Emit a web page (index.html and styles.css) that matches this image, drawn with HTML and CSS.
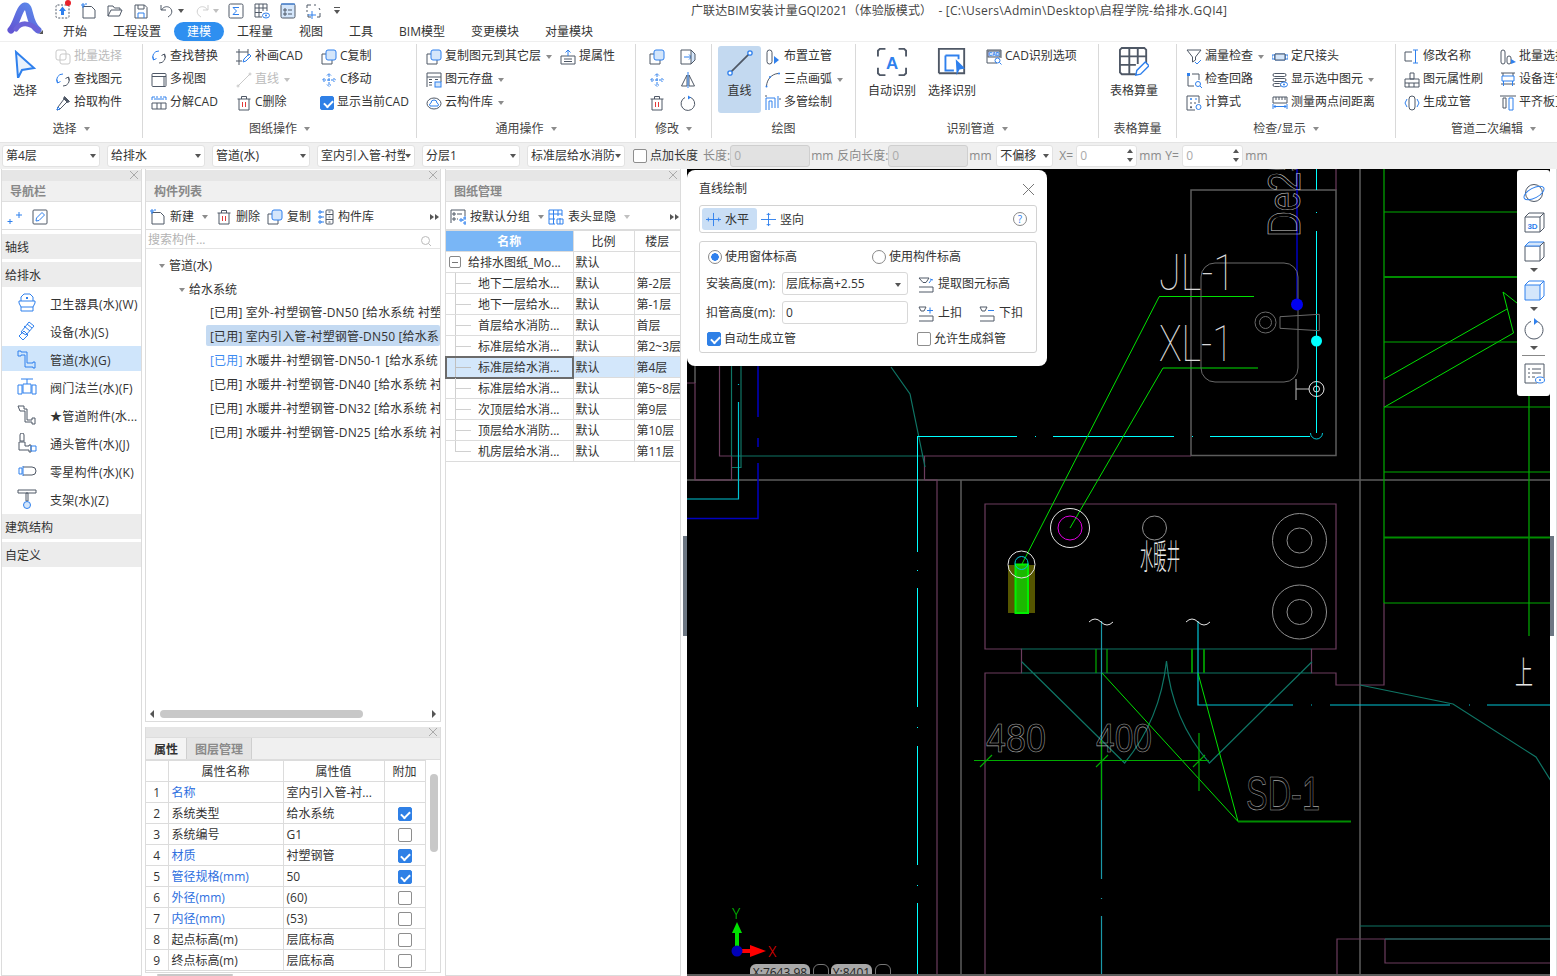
FILE: index.html
```html
<!DOCTYPE html>
<html lang="zh-CN">
<head>
<meta charset="utf-8">
<title>广联达BIM安装计量GQI2021</title>
<link rel="stylesheet" href="styles.css">
</head>
<body>
<svg class="sprite" width="0" height="0">
<defs>
<linearGradient id="logo-g" x1="0" y1="1" x2="1" y2="0"><stop offset="0" stop-color="#6257d4"/><stop offset="1" stop-color="#5a8cec"/></linearGradient>
<symbol id="q-up" viewBox="0 0 16 16"><rect x="1" y="2" width="13" height="13" rx="1.5" stroke-dasharray="2 1.5"/><path class="ifb" d="M7.5 3.5 11 8H9v4H6V8H4z"/></symbol>
<symbol id="q-new" viewBox="0 0 16 16"><path d="M2 3.5h8.5l3.5 3.5v8H2z"/><path class="ib" d="M1 1h2v2H1zM4 1h2M1 4h2"/></symbol>
<symbol id="q-open" viewBox="0 0 16 16"><path d="M1 13V3h5l1.500 2H13v2M1 13h11.500L15 7H4z"/></symbol>
<symbol id="q-save" viewBox="0 0 16 16"><path d="M2 2h9.500L14 4.500V15H2zM5 2v4h6V2"/><path class="ib" d="M5 15v-5h6v5M2 12"/></symbol>
<symbol id="q-undo" viewBox="0 0 16 16"><path d="M2 2v5h5M2.500 7C4.500 3.500 8 3 10.500 4.500c3.500 2.500 3 7-1.500 9.500"/></symbol>
<symbol id="q-redo" viewBox="0 0 16 16"><path class="il" d="M14 2v5H9M13.500 7C11.500 3.500 8 3 5.500 4.500c-3.500 2.500-3 7 1.500 9.500"/></symbol>
<symbol id="q-sum" viewBox="0 0 16 16"><rect x="1" y="1" width="14" height="14" rx="1.500"/><path class="ib" d="M11 4.500H5l3.500 3.500L5 11.500h6"/></symbol>
<symbol id="q-teye" viewBox="0 0 16 16"><path d="M1 1h12v7M1 1v13h7M1 5h12M1 9.500h7M5 1v13M9 1v7"/><ellipse class="ib" cx="12" cy="12.500" rx="3.500" ry="2.500"/><circle class="ifb" cx="12" cy="12.500" r="1"/></symbol>
<symbol id="q-list" viewBox="0 0 16 16"><rect class="ifl" x="1" y="1" width="14" height="14" rx="1.500"/><path class="ib" d="M1 1h14"/><path d="M4 6h2v2H4zM4 10h2v2H4zM8 7h4M8 11h4"/></symbol>
<symbol id="q-frame" viewBox="0 0 16 16"><path d="M1 5V2h4M8 2h2M13 5l1 2M14 10v4h-3M5 14H2v-3M1 7v2"/><path class="ib" d="M2 12h8M6 8v8"/></symbol>
<symbol id="r-batch" viewBox="0 0 16 16"><g class="ig"><rect x="1" y="1" width="10" height="10" rx="2"/><rect x="5" y="5" width="10" height="10" rx="2"/></g></symbol>
<symbol id="r-find" viewBox="0 0 16 16"><path class="ib" d="M8 2a6 6 0 0 0-5.500 9M2 7.500l.5 3.500 3-1.500"/><path d="M8 14a6 6 0 0 0 5.500-9M14 8.500 13.500 5l-3 1.500"/></symbol>
<symbol id="r-pick" viewBox="0 0 16 16"><path d="M10.500 2.500 13.500 5.500M9 4l3 3-7 7-3 1 1-3z"/><path class="ifs" d="M9.500 1.500 14.500 6.500 12.500 7.500 8.500 3.500z"/><path class="ib" d="M3 12l-1 3 3-1z"/></symbol>
<symbol id="r-view" viewBox="0 0 16 16"><rect x="1" y="1.500" width="14" height="13" rx="1"/><path d="M1 4.500h14M13 4.500v10"/></symbol>
<symbol id="r-cadadd" viewBox="0 0 16 16"><path d="M3 0v16M0 3h12M0 12h6M12 0v7"/><path class="ib" d="M7 13l1-3 5-5 2 2-5 5z"/></symbol>
<symbol id="r-line" viewBox="0 0 16 16"><path class="ig" d="M2 14 14 2"/><circle class="ig" cx="2" cy="14" r="1"/><circle class="ig" cx="14" cy="2" r="1"/></symbol>
<symbol id="r-split" viewBox="0 0 16 16"><path class="ib" d="M1 5V2h3M15 5V2h-3M5 2h2M9 2h2"/><path d="M1 8h14M1 14h14M1 8v6M6 8v6M10 8v6M15 8v6"/><path class="ib" d="M3 4h10"/></symbol>
<symbol id="r-trash" viewBox="0 0 16 16"><path d="M1.500 4h13M5.500 4V1.500h5V4M3 4v11h10V4"/><path class="ir" d="M6.500 7v5M9.500 7v5"/></symbol>
<symbol id="r-copy" viewBox="0 0 16 16"><path d="M5 5H1v10h10v-4"/><rect class="ib ifl" x="5" y="1" width="10" height="10" rx="2"/></symbol>
<symbol id="r-move" viewBox="0 0 16 16"><g class="ib"><path d="M8 2v12M2 8h12M6 3.500l2-2 2 2M6 12.500l2 2 2-2M3.500 6l-2 2 2 2M12.500 6l2 2-2 2" stroke-dasharray="3 1"/></g></symbol>
<symbol id="r-store" viewBox="0 0 16 16"><path d="M1 15V1h14v9M1 5h14"/><path d="M3 7.500h3M3 10.500h3M9 7.500h3M3 13h3"/><rect class="ib ifl" x="9" y="10" width="6" height="5"/></symbol>
<symbol id="r-cloud" viewBox="0 0 16 16"><ellipse cx="8" cy="8.500" rx="7" ry="5.500"/><path class="ib" d="M4 11h8M4 11a2 2 0 0 1 1-3a3 3 0 0 1 6 0a2 2 0 0 1 1 3"/></symbol>
<symbol id="r-prop" viewBox="0 0 16 16"><path d="M1 7h14v8H1zM4 10h8M4 12.500h8"/><path class="ib" d="M8 7V1M5.500 3.500 8 1l2.500 2.500"/></symbol>
<symbol id="r-flip" viewBox="0 0 16 16"><path d="M11 1H1v14h10"/><path class="ib" d="M4 8h7M9 5.500 11.500 8 9 10.500"/><path class="ifl" d="M11 1l4 4v6l-4 4z"/></symbol>
<symbol id="r-mirror" viewBox="0 0 16 16"><path d="M7 3 1.500 14H7zM9 3l5.500 11H9z"/><path class="ib" d="M8 0v16"/></symbol>
<symbol id="r-rot" viewBox="0 0 16 16"><path d="M10 2.200A6.800 6.800 0 1 1 5 2.500"/><path class="ifb" d="M8 .5l3 2-3 2z"/></symbol>
<symbol id="b-pointer" viewBox="0 0 24 28"><path class="ib2" d="M3 2 21 18l-12 2-4 8z"/></symbol>
<symbol id="b-line" viewBox="0 0 30 30"><path class="ibd" d="M5 25 25 5"/><circle class="icw" cx="3.500" cy="26.500" r="2.500"/><circle class="icw" cx="26.500" cy="3.500" r="2.500"/></symbol>
<symbol id="d-riser" viewBox="0 0 16 16"><rect x="2" y="1" width="5" height="14" rx="2.500"/><path class="ifb" d="M9 7l5 4-5 4z"/></symbol>
<symbol id="d-arc" viewBox="0 0 16 16"><path d="M1.500 14C2 7 7 2 13 1.500"/><circle class="ifb" cx="1.500" cy="14.500" r="1"/><circle class="ifb" cx="14" cy="1.500" r="1"/><circle class="ifb" cx="5" cy="5" r="1"/></symbol>
<symbol id="d-multi" viewBox="0 0 16 16"><path class="ib" d="M1 15V3h9v10M4 15V6h3v7M13 13V1"/><path d="M0 1h2M14 4h2"/></symbol>
<symbol id="b-auto" viewBox="0 0 32 30"><path class="ibd2" d="M1 9V3l2-2h6M23 1h6l2 2v6M1 21v6l2 2h6M23 29h6l2-2v-6"/><text class="big-a" x="16" y="22" text-anchor="middle">A</text></symbol>
<symbol id="b-sel" viewBox="0 0 32 32"><path class="ibd2" d="M2 28V2h27v26H2"/><path class="ibl2" d="M9 9h14v4M9 9v16h9"/><path class="ifb" d="M20 13l10 10-6 1-3 6z"/></symbol>
<symbol id="r-cad" viewBox="0 0 16 16"><path d="M11 14H1V1h14v8"/><rect class="ifl" x="2" y="2" width="12" height="6"/><text class="mini-t" x="8" y="7" text-anchor="middle">CAD</text><circle class="ib" cx="11.500" cy="11.500" r="2.500"/><path class="ib" d="M13.500 13.500 15.500 15.500"/></symbol>
<symbol id="b-table" viewBox="0 0 32 32"><path class="ibd2" d="M18 29H3l-2-2V3l2-2h24l2 2v15"/><path class="ibd2" d="M1 10h28M1 19h17M11 1v28M20 1v17"/><path class="ib2n" d="M18 30l1-5 9-9 4 4-9 9z"/></symbol>
<symbol id="c-funnel" viewBox="0 0 16 16"><path d="M1 1h14L9.500 8v3L6.500 13V8z"/><path class="ib" d="M9 13l2 2 4-4"/></symbol>
<symbol id="c-loop" viewBox="0 0 16 16"><path d="M2 3v11h6M6 2h7v6"/><rect class="ifb" x="1" y="1" width="3" height="3"/><circle class="ib" cx="12" cy="12" r="2.500"/><path class="ib" d="M14 14l2 2"/></symbol>
<symbol id="c-calc" viewBox="0 0 16 16"><path d="M13 8V1H1v14h8"/><path class="ib" d="M4 4h2M5 3v2M9 4h2"/><path d="M4 8h2M8 8h2M4 11.500l2 1.500M6 11.500 4 13"/><circle class="ib" cx="12.500" cy="12" r="2.500"/></symbol>
<symbol id="c-joint" viewBox="0 0 16 16"><path class="ib" d="M0 6h3v4H0zM13 6h3v4h-3zM3 5h10v6H3z"/><path class="ifl" d="M3 5h10v6H3z"/></symbol>
<symbol id="c-show" viewBox="0 0 16 16"><rect x="1" y="1.500" width="13" height="3" rx="1.500"/><rect x="1" y="6.500" width="13" height="3" rx="1.500"/><rect x="1" y="11.500" width="8" height="3" rx="1.500"/><ellipse class="ib icw2" cx="12" cy="12.500" rx="3.500" ry="2.500"/><circle class="ifb" cx="12" cy="12.500" r="1"/></symbol>
<symbol id="c-measure" viewBox="0 0 16 16"><path d="M1 2h14v6H1zM4 2v3M7 2v3M10 2v3M13 2v3"/><path class="ib" d="M1 9v5M15 9v5M2 11.500h12M3.500 10l-1.500 1.500L3.500 13M12.500 10l1.500 1.500L12.500 13"/></symbol>
<symbol id="e-name" viewBox="0 0 16 16"><path d="M8 3H1v9h7"/><path class="ib" d="M9 1h5M9 14h5M11.500 1v13"/></symbol>
<symbol id="e-brush" viewBox="0 0 16 16"><path d="M6 1h4v6H6zM1 7h14v8H1zM1 11h14M5 11v4M10 11v4"/></symbol>
<symbol id="e-gen" viewBox="0 0 16 16"><rect x="5" y="1" width="6" height="14" rx="3"/><path class="ib" d="M3 4 1 8l2 4M13 4l2 4-2 4"/></symbol>
<symbol id="e-batch" viewBox="0 0 16 16"><rect x="1" y="1" width="4" height="14" rx="2"/><rect x="7" y="7" width="4" height="8" rx="2"/><path class="ifb" d="M11 10l5 3-5 2z"/></symbol>
<symbol id="e-dev" viewBox="0 0 16 16"><path d="M1 1h14M3 1v3M13 1v3M1 12h14"/><path class="ib" d="M2 4h12v5H2zM3.500 9v5M12.500 9v5"/></symbol>
<symbol id="e-align" viewBox="0 0 16 16"><path d="M0 1h16M3 3h3v10H3z"/><path class="ib" d="M9 3h4v12H9z"/></symbol>
<symbol id="n-san" viewBox="0 0 20 20"><path class="ib" d="M4 8V4l3-3h6l3 3v4M2 8h16v2l-2 4v4H4v-4l-2-4zM4 14h12"/><path class="ifb" d="M9 4h2v2H9z"/></symbol>
<symbol id="n-dev" viewBox="0 0 20 20"><path class="ib" d="M4 11 12 1l5 4-8 9zM2 15l5-5 4 4-5 5zM7 5l6 5M10 3l5 4"/></symbol>
<symbol id="n-pipe" viewBox="0 0 20 20"><path class="ib" d="M1 2h3v1h6v11h6v-1h2v6h-2v-1H8V6H4v1H1z"/></symbol>
<symbol id="n-valve" viewBox="0 0 20 20"><path class="ib" d="M4 2h12M10 2v5M6 7h8v9H6zM1 8h4v9H1zM15 8h4v9h-4z"/></symbol>
<symbol id="n-fit" viewBox="0 0 20 20"><path class="id" d="M1 1h6v3h3v11h5v-2h3v6h-3v-2H8V6H3z"/></symbol>
<symbol id="n-head" viewBox="0 0 20 20"><path class="id" d="M3 2a2 2 0 0 1 4 0v6H3zM2 9h6v4h4v-1h2v7h-2v-2H2z"/><path class="ib" d="M14 13h5v5h-5z"/></symbol>
<symbol id="n-misc" viewBox="0 0 20 20"><path class="id" d="M6 6h9a3.500 3.500 0 0 1 0 8H6"/><path class="ib" d="M2 7h3v6H2zM6 5v10"/></symbol>
<symbol id="n-sup" viewBox="0 0 20 20"><path class="id" d="M1 1h18v3H1zM9 4h2v8H9z"/><circle class="ib ifl" cx="10" cy="16" r="3.500"/></symbol>
<symbol id="p-wand" viewBox="0 0 16 16"><path class="ib" d="M9 6h6M12 3v6M3 10v5M0.500 12.500h5"/></symbol>
<symbol id="p-edit" viewBox="0 0 16 16"><rect x="1" y="1" width="14" height="14" rx="1"/><path class="ib" d="M4 12l.5-3L10 3.500l2.500 2.500L7 11.500z"/></symbol>
<symbol id="p-lib" viewBox="0 0 16 16"><path class="ib" d="M1 2h2v2H1zM1 7h2v2H1zM1 12h2v2H1zM3 3h3M3 8h3M3 13h3"/><rect x="8" y="1" width="7" height="14" rx="1"/><path d="M8 5.500h7M8 10.500h7M10.500 3h2M10.500 8h2M10.500 13h2"/></symbol>
<symbol id="p-group" viewBox="0 0 16 16"><path d="M1 14V1h14v6"/><path d="M3 4h2v2H3zM3 9h2v2H3zM7 5h5M7 10h1"/><path class="ib" d="M10 10h2v2h-2zM14 8h2v2h-2zM14 13h2v2h-2zM12 11h2"/></symbol>
<symbol id="p-cols" viewBox="0 0 16 16"><path class="ib" d="M1 1h13v6M1 1v14h6M1 5h13M1 10h6M5.500 1v14M10 1v6"/><path class="ib" d="M9 10h6v5H9zM12 9v6"/></symbol>
<symbol id="g-h" viewBox="0 0 16 16"><path class="ib" d="M0 8h16M8 1v14"/><path class="ib" d="M2.500 6v4M13.500 6v4"/></symbol>
<symbol id="g-v" viewBox="0 0 16 16"><path class="ib" d="M0 8h16M8 1v14M6 2.500h4M6 13.500h4"/></symbol>
<symbol id="g-get" viewBox="0 0 16 16"><path d="M1 1h10L8 5.500H5zM1 15h14M1 10h14v5"/><path class="ib" d="M11 6l3-4M12 2l3 1"/></symbol>
<symbol id="g-in" viewBox="0 0 16 16"><path d="M1 1h7L6 5H3zM1 10h14v5H1"/><path class="ib" d="M9 4.500h6M12 1.500v6"/></symbol>
<symbol id="g-out" viewBox="0 0 16 16"><path d="M1 1h7L6 5H3zM1 10h14v5H1"/><path class="ib" d="M9 4.500h6"/></symbol>
<symbol id="f-globe" viewBox="0 0 22 22"><circle cx="11" cy="11" r="8.500"/><ellipse class="ib" cx="11" cy="11" rx="11" ry="5" transform="rotate(-28 11 11)"/></symbol>
<symbol id="f-3d" viewBox="0 0 22 22"><path d="M2 6h15v15H2zM2 6l4-4h15v15l-4 4M17 6l4-4"/><text class="mini-3" x="9.500" y="18" text-anchor="middle">3D</text></symbol>
<symbol id="f-cube" viewBox="0 0 22 22"><path d="M2 6h15v15H2z"/><path class="ib ifl" d="M2 6l4-4h15l-4 4z"/><path d="M17 6l4-4v15l-4 4"/></symbol>
<symbol id="f-cubeb" viewBox="0 0 22 22"><path class="ib ifl" d="M2 6h15v15H2z"/><path class="ib" d="M2 6l4-4h15v15l-4 4M17 6l4-4"/></symbol>
<symbol id="f-rot" viewBox="0 0 22 22"><path d="M14 3.500A9 9 0 1 1 8 3.500"/><path class="ifb" d="M11 0l4 3.500-4 3.500z"/></symbol>
<symbol id="f-list" viewBox="0 0 22 22"><path d="M14 21H2V2h19v14"/><path d="M5 7h2M9 7h9M5 11h2M9 11h9M5 15h2M9 15h3"/><ellipse class="ib" cx="17" cy="18" rx="4.500" ry="3"/><circle class="ifb" cx="17" cy="18" r="1"/></symbol>
</defs>
</svg>

<div class="app">
  <header class="top">
    <div class="logo">
      <svg width="38" height="34" viewBox="0 0 38 34"><path class="logo-a" d="M5 28C11 22 13 5 19 4c6 0 3 17 13 24"/><path class="logo-b" d="M10 27c5-7 13-7 22 1"/></svg>
      <i class="logo-corner"></i>
    </div>
    <div class="top-main">
      <div class="qat">
        <span class="q"><svg class="ico qi"><use href="#q-up"/></svg><i class="reddot"></i></span>
        <span class="q"><svg class="ico qi"><use href="#q-new"/></svg></span>
        <span class="q"><svg class="ico qi"><use href="#q-open"/></svg></span>
        <span class="q"><svg class="ico qi"><use href="#q-save"/></svg></span>
        <span class="q"><svg class="ico qi"><use href="#q-undo"/></svg></span>
        <span class="q-arrow"><i class="caret dark"></i></span>
        <span class="q q-m"><svg class="ico qi"><use href="#q-redo"/></svg></span>
        <span class="q-arrow"><i class="caret light"></i></span>
        <span class="q"><svg class="ico qi"><use href="#q-sum"/></svg></span>
        <span class="q"><svg class="ico qi"><use href="#q-teye"/></svg></span>
        <span class="q"><svg class="ico qi"><use href="#q-list"/></svg></span>
        <span class="q"><svg class="ico qi"><use href="#q-frame"/></svg></span>
        <span class="q-more"><i class="more-bar"></i><i class="caret dark"></i></span>
        <span class="title">广联达BIM安装计量GQI2021（体验版模式） &nbsp;- <span class="title-p">[C:\Users\Admin\Desktop\启程学院-给排水.GQI4]</span></span>
      </div>
      <nav class="tabs">
        <span class="tab">开始</span><span class="tab">工程设置</span><span class="tab tab-on">建模</span><span class="tab">工程量</span><span class="tab">视图</span><span class="tab">工具</span><span class="tab">BIM模型</span><span class="tab">变更模块</span><span class="tab">对量模块</span>
      </nav>
    </div>
  </header>

  <section class="ribbon">
    <div class="grp g1">
      <div class="grp-body">
        <div class="big big-sel"><svg class="ico big-ic ic-ptr"><use href="#b-pointer"/></svg><span>选择</span></div>
        <div class="col c1a">
          <div class="it dis"><svg class="ico"><use href="#r-batch"/></svg>批量选择</div>
          <div class="it"><svg class="ico"><use href="#r-find"/></svg>查找图元</div>
          <div class="it"><svg class="ico"><use href="#r-pick"/></svg>拾取构件</div>
        </div>
      </div>
      <div class="grp-lab">选择<i class="caret"></i></div>
    </div>
    <div class="grp g2">
      <div class="grp-body">
        <div class="col w85">
          <div class="it"><svg class="ico"><use href="#r-find"/></svg>查找替换</div>
          <div class="it"><svg class="ico"><use href="#r-view"/></svg>多视图</div>
          <div class="it"><svg class="ico"><use href="#r-split"/></svg>分解CAD</div>
        </div>
        <div class="col w85">
          <div class="it"><svg class="ico"><use href="#r-cadadd"/></svg>补画CAD</div>
          <div class="it dis"><svg class="ico"><use href="#r-line"/></svg>直线<i class="caret light it-c"></i></div>
          <div class="it"><svg class="ico"><use href="#r-trash"/></svg>C删除</div>
        </div>
        <div class="col">
          <div class="it"><svg class="ico"><use href="#r-copy"/></svg>C复制</div>
          <div class="it"><svg class="ico"><use href="#r-move"/></svg>C移动</div>
          <div class="it it-chk"><i class="chk on"></i>显示当前CAD</div>
        </div>
      </div>
      <div class="grp-lab">图纸操作<i class="caret"></i></div>
    </div>
    <div class="grp g3">
      <div class="grp-body">
        <div class="col w134">
          <div class="it"><svg class="ico"><use href="#r-copy"/></svg>复制图元到其它层<i class="caret it-c"></i></div>
          <div class="it"><svg class="ico"><use href="#r-store"/></svg>图元存盘<i class="caret it-c"></i></div>
          <div class="it"><svg class="ico"><use href="#r-cloud"/></svg>云构件库<i class="caret it-c"></i></div>
        </div>
        <div class="col">
          <div class="it"><svg class="ico"><use href="#r-prop"/></svg>提属性</div>
        </div>
      </div>
      <div class="grp-lab">通用操作<i class="caret"></i></div>
    </div>
    <div class="grp g4">
      <div class="grp-body">
        <div class="col w31">
          <div class="it"><svg class="ico"><use href="#r-copy"/></svg></div>
          <div class="it"><svg class="ico"><use href="#r-move"/></svg></div>
          <div class="it"><svg class="ico"><use href="#r-trash"/></svg></div>
        </div>
        <div class="col">
          <div class="it"><svg class="ico"><use href="#r-flip"/></svg></div>
          <div class="it"><svg class="ico"><use href="#r-mirror"/></svg></div>
          <div class="it"><svg class="ico"><use href="#r-rot"/></svg></div>
        </div>
      </div>
      <div class="grp-lab">修改<i class="caret"></i></div>
    </div>
    <div class="grp g5">
      <div class="grp-body">
        <div class="big big-line"><svg class="ico big-ic ic-line"><use href="#b-line"/></svg><span>直线</span></div>
        <div class="col c5">
          <div class="it"><svg class="ico"><use href="#d-riser"/></svg>布置立管</div>
          <div class="it"><svg class="ico"><use href="#d-arc"/></svg>三点画弧<i class="caret it-c"></i></div>
          <div class="it"><svg class="ico"><use href="#d-multi"/></svg>多管绘制</div>
        </div>
      </div>
      <div class="grp-lab lab-plain">绘图</div>
    </div>
    <div class="grp g6">
      <div class="grp-body">
        <div class="big big-auto"><svg class="ico big-ic ic-big"><use href="#b-auto"/></svg><span>自动识别</span></div>
        <div class="big big-pick"><svg class="ico big-ic ic-big"><use href="#b-sel"/></svg><span>选择识别</span></div>
        <div class="col c6"><div class="it"><svg class="ico"><use href="#r-cad"/></svg>CAD识别选项</div></div>
      </div>
      <div class="grp-lab">识别管道<i class="caret"></i></div>
    </div>
    <div class="grp g7">
      <div class="grp-body">
        <div class="big big-tab"><svg class="ico big-ic ic-big"><use href="#b-table"/></svg><span>表格算量</span></div>
      </div>
      <div class="grp-lab lab-plain">表格算量</div>
    </div>
    <div class="grp g8">
      <div class="grp-body">
        <div class="col w86">
          <div class="it"><svg class="ico"><use href="#c-funnel"/></svg>漏量检查<i class="caret it-c"></i></div>
          <div class="it"><svg class="ico"><use href="#c-loop"/></svg>检查回路</div>
          <div class="it"><svg class="ico"><use href="#c-calc"/></svg>计算式</div>
        </div>
        <div class="col">
          <div class="it"><svg class="ico"><use href="#c-joint"/></svg>定尺接头</div>
          <div class="it"><svg class="ico"><use href="#c-show"/></svg>显示选中图元<i class="caret it-c"></i></div>
          <div class="it"><svg class="ico"><use href="#c-measure"/></svg>测量两点间距离</div>
        </div>
      </div>
      <div class="grp-lab">检查/显示<i class="caret"></i></div>
    </div>
    <div class="grp g9">
      <div class="grp-body">
        <div class="col w96">
          <div class="it"><svg class="ico"><use href="#e-name"/></svg>修改名称</div>
          <div class="it"><svg class="ico"><use href="#e-brush"/></svg>图元属性刷</div>
          <div class="it"><svg class="ico"><use href="#e-gen"/></svg>生成立管</div>
        </div>
        <div class="col">
          <div class="it"><svg class="ico"><use href="#e-batch"/></svg>批量选择</div>
          <div class="it"><svg class="ico"><use href="#e-dev"/></svg>设备连管</div>
          <div class="it"><svg class="ico"><use href="#e-align"/></svg>平齐板顶</div>
        </div>
      </div>
      <div class="grp-lab">管道二次编辑<i class="caret"></i></div>
    </div>
  </section>

  <section class="optbar">
    <div class="sel">第4层<i class="caret dark"></i></div>
    <div class="sel">给排水<i class="caret dark"></i></div>
    <div class="sel">管道(水)<i class="caret dark"></i></div>
    <div class="sel"><span class="clip">室内引入管-衬塑</span><i class="caret dark"></i></div>
    <div class="sel">分层1<i class="caret dark"></i></div>
    <div class="sel"><span class="clip">标准层给水消防</span><i class="caret dark"></i></div>
    <i class="chk opt-chk"></i><span class="opt-t">点加长度</span>
    <span class="opt-g opt-len">长度:</span><span class="inp-dis">0</span><span class="opt-g opt-mm">mm</span>
    <span class="opt-g">反向长度:</span><span class="inp-dis">0</span><span class="opt-g opt-mm">mm</span>
    <div class="sel sel-off">不偏移<i class="caret dark"></i></div>
    <span class="opt-g opt-x">X=</span><span class="spin">0<i class="spin-b"><i class="caret dark up"></i><i class="caret dark"></i></i></span><span class="opt-g opt-mm2">mm</span>
    <span class="opt-g opt-x">Y=</span><span class="spin">0<i class="spin-b"><i class="caret dark up"></i><i class="caret dark"></i></i></span><span class="opt-g opt-mm2">mm</span>
  </section>

  <main class="main">
    <aside class="panel pa">
      <div class="strip"><i class="x"></i></div>
      <div class="ph">导航栏</div>
      <div class="pt pt-nav"><svg class="ico"><use href="#p-wand"/></svg><svg class="ico"><use href="#p-edit"/></svg></div>
      <div class="nav">
        <div class="nh">轴线</div>
        <div class="nh">给排水</div>
        <div class="ni"><svg class="ico nic"><use href="#n-san"/></svg>卫生器具(水)(W)</div>
        <div class="ni"><svg class="ico nic"><use href="#n-dev"/></svg>设备(水)(S)</div>
        <div class="ni ni-on"><svg class="ico nic"><use href="#n-pipe"/></svg>管道(水)(G)</div>
        <div class="ni"><svg class="ico nic"><use href="#n-valve"/></svg>阀门法兰(水)(F)</div>
        <div class="ni"><svg class="ico nic"><use href="#n-fit"/></svg>★管道附件(水...</div>
        <div class="ni"><svg class="ico nic"><use href="#n-head"/></svg>通头管件(水)(J)</div>
        <div class="ni"><svg class="ico nic"><use href="#n-misc"/></svg>零星构件(水)(K)</div>
        <div class="ni"><svg class="ico nic"><use href="#n-sup"/></svg>支架(水)(Z)</div>
        <div class="nh">建筑结构</div>
        <div class="nh">自定义</div>
      </div>
    </aside>

    <div class="midcol">
      <section class="panel pb">
        <div class="strip"><i class="x"></i></div>
        <div class="ph">构件列表</div>
        <div class="pt">
          <span class="pi"><svg class="ico"><use href="#q-new"/></svg>新建<i class="caret pi-c"></i></span>
          <span class="pi pi-del"><svg class="ico"><use href="#r-trash"/></svg>删除</span>
          <span class="pi"><svg class="ico"><use href="#r-copy"/></svg>复制</span>
          <span class="pi"><svg class="ico"><use href="#p-lib"/></svg>构件库</span>
          <span class="ff"><i></i><i></i></span>
        </div>
        <div class="search">搜索构件...<svg class="ico sic" viewBox="0 0 12 12"><circle cx="5.500" cy="5.500" r="4"/><path d="M8.500 8.500 11 11"/></svg></div>
        <div class="tree">
          <div class="tr tr0"><i class="caret"></i>管道(水)</div>
          <div class="tr tr1"><i class="caret"></i>给水系统</div>
          <div class="tl">[已用] 室外-衬塑钢管-DN50 [给水系统 衬塑</div>
          <div class="tl tl-on">[已用] 室内引入管-衬塑钢管-DN50 [给水系</div>
          <div class="tl"><span class="used">[已用]</span> 水暖井-衬塑钢管-DN50-1 [给水系统</div>
          <div class="tl">[已用] 水暖井-衬塑钢管-DN40 [给水系统 衬</div>
          <div class="tl">[已用] 水暖井-衬塑钢管-DN32 [给水系统 衬</div>
          <div class="tl">[已用] 水暖井-衬塑钢管-DN25 [给水系统 衬</div>
        </div>
        <div class="hs"><i class="tri-l"></i><i class="hs-th"></i><i class="tri-r"></i></div>
      </section>
      <section class="panel pp">
        <div class="strip"><i class="x"></i></div>
        <div class="ptabs"><span class="ptab ptab-on">属性</span><span class="ptab">图层管理</span></div>
        <div class="pbody">
          <table class="grid gp">
            <thead><tr><th></th><th>属性名称</th><th>属性值</th><th>附加</th></tr></thead>
            <tbody>
              <tr><td class="n">1</td><td class="lnk">名称</td><td>室内引入管-衬...</td><td></td></tr>
              <tr><td class="n">2</td><td>系统类型</td><td>给水系统</td><td class="ck"><i class="chk on"></i></td></tr>
              <tr><td class="n">3</td><td>系统编号</td><td>G1</td><td class="ck"><i class="chk"></i></td></tr>
              <tr><td class="n">4</td><td class="lnk">材质</td><td>衬塑钢管</td><td class="ck"><i class="chk on"></i></td></tr>
              <tr><td class="n">5</td><td class="lnk">管径规格(mm)</td><td>50</td><td class="ck"><i class="chk on"></i></td></tr>
              <tr><td class="n">6</td><td class="lnk">外径(mm)</td><td>(60)</td><td class="ck"><i class="chk"></i></td></tr>
              <tr><td class="n">7</td><td class="lnk">内径(mm)</td><td>(53)</td><td class="ck"><i class="chk"></i></td></tr>
              <tr><td class="n">8</td><td>起点标高(m)</td><td>层底标高</td><td class="ck"><i class="chk"></i></td></tr>
              <tr><td class="n">9</td><td>终点标高(m)</td><td>层底标高</td><td class="ck"><i class="chk"></i></td></tr>
            </tbody>
          </table>
          <div class="vs"><i class="vs-th"></i></div>
        </div>
      </section>
      <i class="hs2"></i>
    </div>

    <section class="panel pc">
      <div class="strip"><i class="x"></i></div>
      <div class="ph">图纸管理</div>
      <div class="pt">
        <span class="pi pi-g"><svg class="ico"><use href="#p-group"/></svg>按默认分组<i class="caret pi-c"></i></span>
        <span class="pi pi-h"><svg class="ico"><use href="#p-cols"/></svg>表头显隐<i class="caret pi-c light"></i></span>
        <span class="ff"><i></i><i></i></span>
      </div>
      <table class="grid gd">
        <thead><tr><th class="th-on">名称</th><th>比例</th><th>楼层</th></tr></thead>
        <tbody>
          <tr><td class="t-root"><i class="minus"></i>给排水图纸_Mo...</td><td>默认</td><td></td></tr>
          <tr><td class="t-kid">地下二层给水...</td><td>默认</td><td>第-2层</td></tr>
          <tr><td class="t-kid">地下一层给水...</td><td>默认</td><td>第-1层</td></tr>
          <tr><td class="t-kid">首层给水消防...</td><td>默认</td><td>首层</td></tr>
          <tr><td class="t-kid">标准层给水消...</td><td>默认</td><td>第2~3层</td></tr>
          <tr class="row-on"><td class="t-kid t-cur">标准层给水消...</td><td>默认</td><td>第4层</td></tr>
          <tr><td class="t-kid">标准层给水消...</td><td>默认</td><td>第5~8层</td></tr>
          <tr><td class="t-kid">次顶层给水消...</td><td>默认</td><td>第9层</td></tr>
          <tr><td class="t-kid">顶层给水消防...</td><td>默认</td><td>第10层</td></tr>
          <tr><td class="t-kid t-end">机房层给水消...</td><td>默认</td><td>第11层</td></tr>
        </tbody>
      </table>
    </section>

    <div class="gutter"><i class="handle"></i></div>

    <section class="canvas">
      <svg class="cad" width="863" height="807" viewBox="687 169 863 807">
        <path class="l-g" d="M687 480H1550M961 480V976M1360 169V976M1191 190H1336V455.500H1191ZM695 366V383"/>
        <path class="l-p" d="M687 383H695V480H731.500V456H719.500V366M924.500 480V456H1191M924.500 480H937V976M985 976V673H1021.500V649H985V504H1336V649H1311.500V673H1336V685H1384V603M1384 407V380M1336 169V190M1337 976V939H1550M1385 939V963H1550"/>
        <path class="l-t" d="M731.500 366V456M731.500 456H924M741 366V467.500H732M1021.500 649H1311.500M1021.500 673H1311.500M891 367 910 394 925 467M1021.700 661.700 1124.600 763Q1160 720 1166.500 661Q1172 720 1209.400 763L1312 661.700M1360 685 1453 704 1536 757 1551 781M1360 926H1550M1385 939H1550"/>
        <path class="l-b" d="M758 366V417M758 438V447M758 463V518.500H687M1297 169V300"/>
        <path class="l-c" d="M918 436.500H1017M1035 436.500H1036M1053 436.500H1174M1192 436.500H1193M1210 436.500H1310M917.500 436V552M917.500 570V571M917.500 588V707M917.500 727V728M917.500 746V865M917.500 885V886M917.500 903V976M1316.500 169V190M1316.500 212V213M1316.500 231V433"/>
        <path class="l-c2" d="M738.500 402V499H687M738.500 384V385M1198 621V705H1293M1311 705H1312M1330 705H1450M1469 705H1470M1487 705H1550"/>
        <path class="l-c3" d="M1101.500 621V879M1101.500 898V899M1101.500 916V976"/>
        <path class="l-n" d="M1159 296.500H1254M1159 297 1022 564M1163 368H1258M1163 368 1070 528M1384 379 1507 309M1503 292 1513.500 333 1384 407.300M1503 292 1517 303M1102 673 1238 821.500M1198 673 1238 821.500"/>
        <path class="l-m" d="M1384 169V380M1384 407V603M1384 212H1517M1384 342H1517M1384 407H1550M1384 472H1550M1384 603H1550M1529 396V636M1096 649V673M1107 649V673M974 760.500H1209M980 767 992 755M1096 767 1108 755M1193 767 1205 755M1199 733V791M1101.500 740V800"/>
        <path class="l-d" d="M1384 277H1517M1384 537.500H1550M1238 821.500H1351M1192 649V673M1204 649V673"/>
        <rect class="l-g2" x="1201" y="263" width="97" height="119" rx="14"/>
        <path class="l-g2" d="M1280 316.700 1319.300 314.300V330.700L1280 328.300Z"/>
        <circle class="l-g2" cx="1265.500" cy="322.500" r="10.500"/><circle class="l-g2" cx="1265.500" cy="322.500" r="6"/>
        <path class="l-w2" d="M1296 379V400M1296 389H1309"/>
        <circle class="l-w" cx="1316.500" cy="389" r="7.500"/><circle class="l-w" cx="1316.500" cy="389" r="3"/>
        <path class="l-cy" d="M1310.500 433a6 6 0 1 0 12 0"/>
        <circle class="f-b" cx="1297" cy="304.500" r="6"/>
        <circle class="f-c" cx="1316.500" cy="341" r="5.500"/>
        <circle class="l-w" cx="1070" cy="528" r="19.500"/>
        <circle class="l-mg" cx="1070" cy="528" r="12"/>
        <circle class="l-g3" cx="1154.500" cy="528" r="12"/>
        <circle class="l-g3" cx="1299.500" cy="540.500" r="27"/><circle class="l-g3" cx="1299.500" cy="540.500" r="12.500"/>
        <circle class="l-g3" cx="1299.500" cy="612" r="27"/><circle class="l-g3" cx="1299.500" cy="612" r="12.500"/>
        <rect class="f-o" x="1008" y="565" width="27" height="48"/>
        <rect class="f-g" x="1015.500" y="564.500" width="12.500" height="48.500"/>
        <circle class="l-w" cx="1021.500" cy="564.500" r="13.500"/>
        <circle class="l-cy" cx="1021.500" cy="563" r="6.500"/>
        <path class="l-w" d="M1089 622q6-6 12 0t12 0M1186 622q6-6 12 0t12 0"/>
        <text class="tx-hol tx-br" transform="translate(1300 237) rotate(-90)" textLength="85" lengthAdjust="spacingAndGlyphs" font-size="47">De25</text>
        <text class="tx-thin" x="1159" y="290" textLength="76" lengthAdjust="spacingAndGlyphs" font-size="50">JL-1</text>
        <text class="tx-thin" x="1159" y="361" textLength="74" lengthAdjust="spacingAndGlyphs" font-size="50">XL-1</text>
        <text class="tx-hol" x="986" y="752" textLength="60" lengthAdjust="spacingAndGlyphs" font-size="41">480</text>
        <text class="tx-hol" x="1096" y="752" textLength="56" lengthAdjust="spacingAndGlyphs" font-size="41">400</text>
        <text class="tx-hol" x="1246" y="810" textLength="74" lengthAdjust="spacingAndGlyphs" font-size="49">SD-1</text>
        <text class="tx-cjk" x="1140" y="569" textLength="40" lengthAdjust="spacingAndGlyphs" font-size="34">水暖井</text>
        <text class="tx-cjk" x="1515" y="684" textLength="18" lengthAdjust="spacingAndGlyphs" font-size="32">上</text>
        <path class="ax-g" d="M737 951V932"/><path class="f-lg" d="M737 922 742 933H732Z"/>
        <path class="ax-r" d="M741 951H752"/><path class="f-r" d="M766 951 750 945V957Z"/>
        <circle class="f-b2" cx="737" cy="951" r="5.500"/>
        <text class="tx-y" x="732" y="919">Y</text>
        <text class="tx-x" x="768" y="957">X</text>
      </svg>
      <div class="coords">
        <span class="cpill cp-x">X:7643.98</span><span class="cpill cp-e"></span><span class="cpill cp-y">Y:8401</span><span class="cpill cp-e"></span>
      </div>
      <div class="baseline"></div>

      <div class="dlg">
        <div class="dlg-t"><span>直线绘制</span><i class="dlg-x"></i></div>
        <div class="dlg-b1">
          <span class="seg seg-on"><svg class="ico"><use href="#g-h"/></svg>水平</span>
          <span class="seg"><svg class="ico"><use href="#g-v"/></svg>竖向</span>
          <span class="help">?</span>
        </div>
        <div class="dlg-b2">
          <div class="dr dr1"><label class="rl rl1"><i class="radio on"></i>使用窗体标高</label><label class="rl"><i class="radio"></i>使用构件标高</label></div>
          <div class="dr"><span class="dl">安装高度(m):</span><span class="dc">层底标高+2.55<i class="caret dark"></i></span><span class="da"><svg class="ico"><use href="#g-get"/></svg>提取图元标高</span></div>
          <div class="dr dr3"><span class="dl">扣管高度(m):</span><span class="dc">0</span><span class="da da-s"><svg class="ico"><use href="#g-in"/></svg>上扣</span><span class="da"><svg class="ico"><use href="#g-out"/></svg>下扣</span></div>
          <div class="dr dr4"><label class="cl cl1"><i class="chk on"></i>自动生成立管</label><label class="cl"><i class="chk"></i>允许生成斜管</label></div>
        </div>
      </div>

      <div class="float">
        <svg class="ico fi"><use href="#f-globe"/></svg>
        <svg class="ico fi"><use href="#f-3d"/></svg>
        <svg class="ico fi"><use href="#f-cube"/></svg>
        <i class="fc"><i class="caret dark"></i></i>
        <svg class="ico fi"><use href="#f-cubeb"/></svg>
        <i class="fc"><i class="caret dark"></i></i>
        <svg class="ico fi"><use href="#f-rot"/></svg>
        <i class="fc"><i class="caret dark"></i></i>
        <i class="fd"></i>
        <svg class="ico fi fi-l"><use href="#f-list"/></svg>
      </div>
    </section>

    <div class="gutter-r"><i class="handle"></i></div>
  </main>
</div>
</body>
</html>
```

FILE: styles.css
```css
* { box-sizing: border-box; }
html, body { margin: 0; padding: 0; height: 100%; overflow: hidden; background: #fff; }
body { font: 12px/1.2 "Open Sans", "Noto Sans CJK SC", "Liberation Sans", sans-serif; color: #333; }
i { font-style: normal; display: block; }
.sprite { position: absolute; }
.app { width: 1557px; height: 976px; display: flex; flex-direction: column; overflow: hidden; }

/* icons */
.ico { width: 16px; height: 16px; flex: none; fill: none; stroke: #4f5866; stroke-width: 1; overflow: visible; }
.ib { stroke: #2f80ed; }
.ir { stroke: #e23a3a; }
.ig { stroke: #c9c9c9; }
.il { stroke: #cfcfcf; }
.id { stroke: #4f5866; }
.ifb { fill: #2f80ed; stroke: none; }
.ifl { fill: #d4e6fb; }
.ifs { fill: #4f5866; }
.ib2 { stroke: #2f80ed; stroke-width: 2; fill: #e8f1fc; }
.ib2n { stroke: #2f80ed; stroke-width: 1.500; fill: #fff; }
.ibd { stroke: #4f5866; stroke-width: 2; }
.ibd2 { stroke: #4f5866; stroke-width: 2; }
.ibl2 { stroke: #2f80ed; stroke-width: 2; }
.icw { stroke: #2f80ed; stroke-width: 1.500; fill: #fff; }
.icw2 { fill: #fff; }
.big-a { font: 700 18px "Liberation Sans", sans-serif; fill: #2f80ed; stroke: none; }
.mini-t { font: 700 5px "Liberation Sans", sans-serif; fill: #2f80ed; stroke: none; }
.mini-3 { font: 700 8px "Liberation Sans", sans-serif; fill: #2f80ed; stroke: none; }
.caret { width: 0; height: 0; border-left: 3.500px solid transparent; border-right: 3.500px solid transparent; border-top: 4px solid #8c8c8c; }
.caret.dark { border-top-color: #555; border-left-width: 3px; border-right-width: 3px; }
.caret.light { border-top-color: #c0c0c0; }
.caret.up { border-top: 0; border-bottom: 4px solid #555; }

/* top */
.top { display: flex; height: 41px; flex: none; }
.logo { width: 50px; position: relative; padding: 2px 0 0 6px; }
.logo-a { fill: none; stroke: url(#logo-g); stroke-width: 7; stroke-linecap: round; stroke-linejoin: round; }
.logo-b { fill: none; stroke: #6c63d8; stroke-width: 5; stroke-linecap: round; }
.logo-corner { position: absolute; left: 39px; top: 30px; border-bottom: 4px solid #555; border-left: 4px solid transparent; }
.top-main { flex: 1; }
.qat { height: 21px; display: flex; align-items: center; }
.q { width: 26px; display: flex; justify-content: center; position: relative; }
.q-m { margin-left: 1px; }
.qi { width: 16px; height: 16px; }
.reddot { position: absolute; left: 15px; top: -3px; width: 6px; height: 6px; border-radius: 50%; background: #e8222c; }
.q-arrow { width: 14px; margin-left: -6px; display: flex; justify-content: center; }
.q-more { width: 19px; display: flex; flex-direction: column; align-items: center; gap: 2px; }
.more-bar { width: 6px; height: 1px; background: #555; }
.title { margin: 2px 0 0 345px; white-space: pre; color: #444; letter-spacing: .1px; }
.title-p { letter-spacing: .3px; }
.tabs { height: 20px; display: flex; margin-top: 1px; }
.tab { padding: 0 13px; height: 19px; line-height: 20px; border-radius: 10px; white-space: nowrap; }
.tab-on { background: #2e8ff0; color: #fff; }

/* ribbon */
.ribbon { height: 101px; flex: none; display: flex; padding: 2px 0 4px; border-top: 1px solid #efefef; background: #fff; overflow: hidden; }
.grp { flex: none; display: flex; flex-direction: column; border-right: 1px solid #d9d9d9; }
.grp-body { display: flex; align-items: flex-start; padding-top: 1px; }
.grp-lab { margin-top: auto; height: 20px; padding-top: 2px; display: flex; justify-content: center; align-items: center; gap: 7px; color: #444; }
.lab-plain { gap: 0; }
.g1 { width: 143px; }
.g2 { width: 274px; }
.g2 .grp-body { padding-left: 8px; }
.g3 { width: 219px; }
.g3 .grp-body { padding-left: 9px; }
.g4 { width: 76px; }
.g4 .grp-body { padding-left: 13px; }
.g5 { width: 144px; }
.g5 .grp-body { padding-left: 6px; }
.g6 { width: 243px; }
.g7 { width: 78px; }
.g8 { width: 219px; }
.g8 .grp-body { padding-left: 9px; }
.g9 { width: 161px; border-right: 0; }
.g9 .grp-body { padding-left: 8px; }
.g9 .grp-lab { padding-left: 34px; }
.col { display: flex; flex-direction: column; flex: none; }
.w85 { width: 85px; }
.w134 { width: 134px; }
.w31 { width: 31px; }
.w86 { width: 86px; }
.w96 { width: 96px; }
.c1a { margin-left: 5px; }
.c5 { margin-left: 4px; }
.c6 { margin-left: 4px; }
.it { height: 23px; display: flex; align-items: center; gap: 3px; white-space: nowrap; }
.it-c { margin-left: 2px; }
.dis { color: #bbb; }
.it-chk { margin-left: -1px; gap: 3px; }
.big { display: flex; flex-direction: column; align-items: center; flex: none; }
.big-sel { width: 50px; padding-top: 5px; }
.big-ic { display: block; }
.ic-ptr { width: 24px; height: 28px; margin-bottom: 6px; }
.big-line { width: 43px; height: 67px; padding-top: 4px; margin-top: 1px; background: #c3d9f0; border-radius: 3px; }
.ic-line { width: 26px; height: 26px; margin-bottom: 8px; }
.big-auto { width: 60px; margin-left: 6px; padding-top: 2px; }
.big-pick { width: 60px; padding-top: 2px; }
.big-tab { width: 78px; padding-top: 2px; margin-left: -4px; }
.ic-big { width: 30px; height: 30px; margin-bottom: 7px; }

/* option bar */
.optbar { height: 27px; flex: none; display: flex; align-items: center; padding-left: 2px; background: #f0f0f0; border-top: 1px solid #e4e4e4; white-space: nowrap; }
.sel { width: 98px; height: 22px; margin-right: 7px; padding: 0 3px 0 3px; display: flex; align-items: center; justify-content: space-between; background: #fff; border: 1px solid #e2e2e2; border-radius: 3px; flex: none; }
.clip { width: 84px; overflow: hidden; white-space: nowrap; }
.sel-off { width: 57px; margin: 0 6px 0 1px; }
.opt-chk { margin-left: 1px; }
.opt-t { margin-left: 3px; }
.opt-g { color: #8a8a8a; flex: none; }
.opt-len { margin-left: 5px; }
.opt-mm { margin: 0 0 0 1px; width: 26px; }
.opt-mm2 { margin-left: 2px; width: 26px; }
.opt-x { width: 17px; }
.inp-dis { width: 80px; height: 22px; line-height: 20px; padding-left: 3px; background: #e2e2e2; border: 1px solid #cfcfcf; border-radius: 3px; color: #aaa; flex: none; }
.spin { width: 61px; height: 22px; line-height: 20px; padding-left: 3px; background: #fff; border: 1px solid #e2e2e2; border-radius: 3px; color: #aaa; position: relative; flex: none; }
.spin-b { position: absolute; right: 3px; top: 3px; display: flex; flex-direction: column; gap: 5px; }

/* panels */
.main { flex: 1; display: flex; min-height: 0; background: #fff; position: relative; }
.panel { display: flex; flex-direction: column; border: 1px solid #dcdcdc; border-top: 0; background: #fff; flex: none; }
.strip { height: 11px; flex: none; margin-top: 1px; background: #e6e6e6; position: relative; }
.x { position: absolute; right: 3px; top: 1px; width: 8px; height: 8px; background: linear-gradient(45deg, transparent 45%, #aaa 45%, #aaa 55%, transparent 55%), linear-gradient(-45deg, transparent 45%, #aaa 45%, #aaa 55%, transparent 55%); }
.ph { height: 21px; flex: none; line-height: 22px; padding-left: 8px; background: #f0f0f0; border-bottom: 1px solid #e0e0e0; color: #888; font-weight: 600; }
.pt { height: 28px; flex: none; display: flex; align-items: center; padding: 3px 0 0 4px; border-bottom: 1px solid #dcdcdc; position: relative; }
.pt-nav { padding-left: 5px; gap: 9px; }
.pi { display: flex; align-items: center; gap: 4px; margin-right: 7px; white-space: nowrap; }
.pi-c { margin-left: 4px; }
.pi-del { margin-left: 1px; }
.pi-g { margin-right: 4px; }
.ff { position: absolute; right: 2px; top: 6px; width: 8px; height: 17px; display: flex; align-items: center; gap: 1px; background: #fff; }
.ff i { border-left: 4px solid #555; border-top: 3px solid transparent; border-bottom: 3px solid transparent; }
.pa { width: 141px; margin-left: 1px; }
.nav { display: flex; flex-direction: column; gap: 3px; padding-top: 4px; }
.nh { height: 25px; line-height: 28px; padding-left: 3px; background: #ececec; overflow: hidden; }
.ni { height: 25px; display: flex; align-items: center; white-space: nowrap; padding: 5px 0 0 15px; letter-spacing: .25px; }
.ni-on { background: #cfe5fb; }
.nic { width: 20px; height: 20px; margin: -5px 13px 0 0; }
.midcol { width: 296px; margin-left: 3px; display: flex; flex-direction: column; flex: none; }
.pb { height: 553px; flex: none; }
.search { height: 19px; flex: none; display: flex; align-items: center; justify-content: space-between; padding: 3px 8px 0 2px; color: #b3b3b3; border-bottom: 1px solid #e4e4e4; }
.sic { width: 12px; height: 12px; stroke: #bbb; }
.tree { flex: 1; padding-top: 4px; overflow: hidden; }
.tr { height: 24px; display: flex; align-items: center; gap: 4px; padding-top: 2px; }
.tr0 { padding-left: 13px; }
.tr1 { padding-left: 33px; }
.tl { height: 21px; line-height: 23px; margin: 0 0 3px 60px; padding-left: 4px; white-space: nowrap; overflow: hidden; border-radius: 2px; letter-spacing: .15px; }
.tl-on { background: #c4daf2; }
.used { color: #3d8bf2; }
.hs { height: 15px; flex: none; display: flex; align-items: center; padding: 0 4px; gap: 6px; }
.hs-th { width: 203px; height: 8px; border-radius: 4px; background: #c8c8c8; }
.hs2 { width: 76px; height: 2px; margin: 1px 0 0 12px; flex: none; background: #c8c8c8; border-radius: 1px; }
.tri-l, .tri-r { border-top: 4px solid transparent; border-bottom: 4px solid transparent; }
.tri-l { border-right: 4px solid #555; }
.tri-r { border-left: 4px solid #555; margin-left: auto; }
.pp { flex: 1; margin-top: 5px; min-height: 0; overflow: hidden; }
.pp .strip { margin-top: 0; height: 10px; }
.ptabs { height: 23px; flex: none; display: flex; background: #f0f0f0; border-top: 1px solid #ddd; border-bottom: 1px solid #ddd; }
.ptab { width: 65px; line-height: 23px; text-align: center; color: #8a8a8a; font-weight: 600; background: #e4e4e4; border-right: 1px solid #cfcfcf; }
.ptab-on { width: 41px; color: #333; background: #f4f4f4; }
.pbody { display: flex; flex: 1; min-height: 0; position: relative; }
.grid { border-collapse: collapse; table-layout: fixed; flex: none; }
.grid th, .grid td { height: 21px; padding: 2px 3px 0; border: 1px solid #dcdcdc; font-weight: 400; text-align: left; white-space: nowrap; overflow: hidden; }
.grid th { text-align: center; }
.gp { width: 279px; margin-bottom: auto; }
.gp th:nth-child(1) { width: 22px; }
.gp th:nth-child(2) { width: 115px; }
.gp th:nth-child(3) { width: 101px; }
.gp th:nth-child(4) { width: 41px; }
.gp tr > :first-child { border-left: 0; }
.gp td.n { text-align: center; }
.lnk { color: #2e6fe0; }
.ck { text-align: center; }
.ck .chk { margin: 0 auto; }
.vs { flex: 1; position: relative; }
.vs-th { position: absolute; left: 4px; top: 14px; width: 8px; height: 78px; border-radius: 4px; background: #c8c8c8; }
.pc { width: 236px; margin-left: 4px; height: 807px; }
.gd { width: 234px; }
.gd th:nth-child(1) { width: 127px; }
.gd th:nth-child(2) { width: 61px; }
.gd th:nth-child(3) { width: 46px; }
.gd td { padding-left: 2px; }
.gd tr > :first-child { border-left: 0; }
.gd tr > :last-child { border-right: 0; }
.th-on.th-on { background: #79b6f6; color: #fff; font-weight: 600; }
.row-on td { background: #d3e7fb; }
.gd .t-root { position: relative; padding-left: 22px; }
.minus { position: absolute; left: 3px; top: 4px; width: 12px; height: 12px; border: 1px solid #888; border-radius: 2px; background: linear-gradient(#777, #777) center / 6px 1px no-repeat; }
.gd .t-kid { position: relative; padding-left: 32px; background: linear-gradient(#d0d0d0, #d0d0d0) 9px 0 / 1px 100% no-repeat, linear-gradient(#d0d0d0, #d0d0d0) 9px 10px / 16px 1px no-repeat; }
.gd .row-on .t-kid { background: linear-gradient(#c0c0c0, #c0c0c0) 9px 0 / 1px 100% no-repeat, linear-gradient(#c0c0c0, #c0c0c0) 9px 10px / 16px 1px no-repeat, #d3e7fb; }
.gd .t-end { background: linear-gradient(#d0d0d0, #d0d0d0) 9px 0 / 1px 10px no-repeat, linear-gradient(#d0d0d0, #d0d0d0) 9px 10px / 16px 1px no-repeat; }
.t-cur { outline: 2px solid #6b6b6b; outline-offset: -1px; }
.gutter { width: 6px; margin-left: 0; position: relative; flex: none; }
.gutter .handle { left: 2px; }
.handle { position: absolute; top: 367px; width: 4px; height: 100px; background: #6d7783; }
.gutter-r { width: 7px; position: relative; flex: none; border-right: 1px solid #dcdcdc; }
.gutter-r .handle { left: 0; }

/* canvas */
.canvas { width: 863px; flex: none; background: #000; position: relative; overflow: hidden; }
.cad { display: block; fill: none; }
.l-g { stroke: #5c5c5c; stroke-width: 1.500; }
.l-p { stroke: #6c3c5e; stroke-width: 1.200; }
.l-t { stroke: #0f7565; stroke-width: 1.200; }
.l-b { stroke: #0000c0; stroke-width: 1.500; }
.l-c { stroke: #00ffff; stroke-width: 1; }
.l-c2 { stroke: #00c4d4; stroke-width: 1.200; }
.l-c3 { stroke: #1a98a8; stroke-width: 1.200; }
.l-n { stroke: #00e000; stroke-width: 1; }
.l-m { stroke: #00ac00; stroke-width: 1.200; }
.l-d { stroke: #008c00; stroke-width: 2; }
.l-g2 { stroke: #6a6a6a; stroke-width: 1; }
.l-g3 { stroke: #8f8f8f; stroke-width: 1; }
.l-w { stroke: #e6e6e6; stroke-width: 1; }
.l-w2 { stroke: #bdbdbd; stroke-width: 1; }
.l-cy { stroke: #00c8d8; stroke-width: 1; }
.l-mg { stroke: #e000e0; stroke-width: 1; }
.f-b { fill: #0000f0; }
.f-b2 { fill: #0000b8; }
.f-c { fill: #00ffff; }
.f-o { fill: #555500; }
.f-g { fill: #1cb800; stroke: #00f000; stroke-width: 2; }
.f-lg { fill: #00e000; }
.f-r { fill: #ff0000; }
.ax-g { stroke: #00e000; stroke-width: 4; }
.ax-r { stroke: #ff0000; stroke-width: 4; }
.tx-thin { font-family: Roboto, "Liberation Sans", sans-serif; font-weight: 100; fill: #d8d8d8; }
.tx-hol { font-family: "Liberation Sans", sans-serif; fill: none; stroke: #a6a6a6; stroke-width: .6; }
.tx-br { stroke: #d0d0d0; }
.tx-cjk { font-family: "Noto Sans CJK SC", sans-serif; font-weight: 300; fill: #e8e8e8; }
.tx-y { font: 300 14px Roboto, sans-serif; fill: #00c800; }
.tx-x { font: 300 14px Roboto, sans-serif; fill: #e00000; }
.coords { position: absolute; left: 63px; top: 795px; display: flex; }
.cpill { height: 24px; line-height: 17px; border-radius: 6px; background: #a8a8a8; color: #222; text-align: center; flex: none; }
.cp-x { width: 60px; }
.cp-y { width: 41px; }
.cp-e { width: 16px; margin: 0 2px 0 3px; background: #000; border: 1px solid #777; }
.baseline { position: absolute; left: 0; right: 0; bottom: 0; height: 2px; background: #5c5c5c; }

/* dialog */
.dlg { position: absolute; left: 0; top: 1px; width: 360px; height: 196px; padding: 0 10px 0 12px; background: #fff; border-radius: 8px; box-shadow: 0 0 3px rgba(0, 0, 0, .4); }
.dlg-t { height: 35px; display: flex; align-items: center; justify-content: space-between; padding: 3px 3px 0 0; color: #333; }
.dlg-x { width: 11px; height: 11px; background: linear-gradient(45deg, transparent 46%, #777 46%, #777 54%, transparent 54%), linear-gradient(-45deg, transparent 46%, #777 46%, #777 54%, transparent 54%); }
.dlg-b1 { height: 28px; display: flex; align-items: center; padding: 0 2px; border: 1px solid #d2d2d2; border-radius: 3px; }
.seg { height: 22px; display: flex; align-items: center; padding: 3px 6px 0 4px; gap: 4px; border-radius: 3px; }
.seg-on { width: 55px; background: #c9def5; }
.seg .ico { width: 15px; height: 15px; margin-top: -2px; }
.help { margin-left: auto; margin-right: 7px; width: 14px; height: 14px; line-height: 12px; border: 1px solid #888; border-radius: 50%; color: #2f80ed; text-align: center; font-size: 10px; }
.dlg-b2 { height: 112px; margin-top: 8px; padding: 0 6px; border: 1px solid #d2d2d2; border-radius: 3px; }
.dr { display: flex; align-items: center; height: 23px; }
.dr1 { height: 28px; margin-bottom: 2px; padding: 2px 0 0 2px; }
.dr3 { margin-top: 6px; }
.dr4 { margin-top: 4px; height: 20px; padding: 2px 0 0 1px; }
.rl, .cl { display: flex; align-items: center; gap: 3px; }
.rl1 { width: 164px; }
.cl1 { width: 210px; }
.radio { width: 14px; height: 14px; border: 1px solid #888; border-radius: 50%; background: #fff; flex: none; }
.radio.on { background: radial-gradient(circle, #2f80ed 0 3.500px, #fff 4px); }
.dl { width: 76px; flex: none; padding-top: 2px; }
.dc { width: 126px; height: 23px; flex: none; display: flex; align-items: center; justify-content: space-between; padding: 2px 6px 0 3px; margin-right: 10px; border: 1px solid #d8d8d8; border-radius: 3px; }
.da { display: flex; align-items: center; gap: 4px; padding-top: 2px; }
.da-s { width: 61px; }
.chk { width: 14px; height: 14px; flex: none; border: 1px solid #8e8e8e; border-radius: 2px; background: #fff; }
.chk.on { border-color: #2f80e6; background: #2f80e6; position: relative; }
.chk.on::after { content: ""; display: block; width: 7px; height: 4px; margin: 3px 0 0 2.500px; border-left: 2px solid #fff; border-bottom: 2px solid #fff; transform: rotate(-45deg); }

/* float toolbar */
.float { position: absolute; right: 0; top: 1px; width: 33px; height: 226px; padding-top: 8px; display: flex; flex-direction: column; align-items: center; background: #fff; border-radius: 3px; }
.fi { width: 22px; height: 22px; margin: 3.500px 0; }
.fc { height: 10px; display: flex; align-items: center; }
.fc .caret { border-left-width: 4px; border-right-width: 4px; border-top-width: 4px; }
.fd { width: 23px; height: 1px; margin-top: 2px; background: #888; }
.fi-l { margin-top: 5.500px; }
```
